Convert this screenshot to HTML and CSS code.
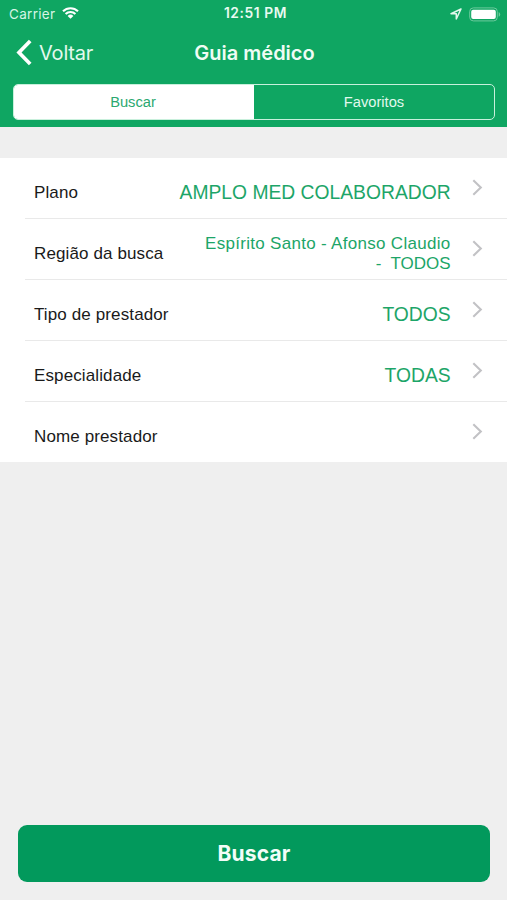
FILE: index.html
```html
<!DOCTYPE html>
<html lang="pt-BR">
<head>
    <meta charset="UTF-8">
    <title>Guia médico</title>
    <link rel="stylesheet" href="styles.css">
</head>
<body>
<header class="header">
    <div class="status">
        <div class="status-left">
            <span class="carrier">Carrier</span>
            <svg class="wifi" width="17" height="12" viewBox="0 0 17 12">
                <path d="M1 4.3a10.7 10.7 0 0 1 15 0M3.6 7a7 7 0 0 1 9.8 0" fill="none" stroke="#fff" stroke-width="2.1"/>
                <path d="M8.5 11.8L5.6 8.9a4.1 4.1 0 0 1 5.8 0z" fill="#fff"/>
            </svg>
        </div>
        <span class="time">12:51 PM</span>
        <div class="status-right">
            <svg class="location" width="12" height="12" viewBox="0 0 12 12">
                <path d="M11 1L1 5.7H6.3V11z" fill="none" stroke="#e2f7ec" stroke-width="1.5" stroke-linejoin="round"/>
            </svg>
            <svg class="battery" width="32" height="15" viewBox="0 0 32 15">
                <rect x=".7" y=".9" width="27.6" height="13" rx="3.6" fill="none" stroke="#6cc99d" stroke-width="1"/>
                <rect x="2.2" y="2.7" width="24.6" height="9.4" rx="2" fill="#fff"/>
                <path d="M29.7 5v4.8q1.5-.8 1.5-2.4t-1.5-2.4z" fill="#6cc99d"/>
            </svg>
        </div>
    </div>
    <nav class="navbar">
        <a class="back">
            <svg width="17" height="27" viewBox="0 0 17 27">
                <path d="M14.2 2L3 13.5 14.2 25" fill="none" stroke="#fff" stroke-width="3.7"/>
            </svg>
            <span>Voltar</span>
        </a>
        <h1 class="title">Guia médico</h1>
    </nav>
    <div class="tabs">
        <div class="tab active">Buscar</div>
        <div class="tab">Favoritos</div>
    </div>
</header>

<ul class="list">
    <li class="row">
        <span class="label">Plano</span>
        <span class="value">AMPLO MED COLABORADOR</span>
        <svg class="chevron" width="11" height="17" viewBox="0 0 11 17"><path d="M1.3 1.2L8.8 8.5 1.3 15.8"/></svg>
    </li>
    <li class="row">
        <span class="label">Região da busca</span>
        <span class="value small"><span class="city">Espírito Santo - Afonso Claudio</span><br>-&nbsp; TODOS</span>
        <svg class="chevron" width="11" height="17" viewBox="0 0 11 17"><path d="M1.3 1.2L8.8 8.5 1.3 15.8"/></svg>
    </li>
    <li class="row">
        <span class="label">Tipo de prestador</span>
        <span class="value">TODOS</span>
        <svg class="chevron" width="11" height="17" viewBox="0 0 11 17"><path d="M1.3 1.2L8.8 8.5 1.3 15.8"/></svg>
    </li>
    <li class="row">
        <span class="label">Especialidade</span>
        <span class="value">TODAS</span>
        <svg class="chevron" width="11" height="17" viewBox="0 0 11 17"><path d="M1.3 1.2L8.8 8.5 1.3 15.8"/></svg>
    </li>
    <li class="row">
        <span class="label">Nome prestador</span>
        <span class="value"></span>
        <svg class="chevron" width="11" height="17" viewBox="0 0 11 17"><path d="M1.3 1.2L8.8 8.5 1.3 15.8"/></svg>
    </li>
</ul>

<footer class="footer">
    <button class="search">Buscar</button>
</footer>
</body>
</html>
```
FILE: styles.css
```css
* {
    box-sizing: border-box;
}

body {
    display: flex;
    flex-direction: column;
    height: 900px;
    margin: 0;
    background-color: #efefef;
    font-family: "Liberation Sans", Arial, sans-serif;
}

/* header */
.header {
    height: 127px;
    background-color: #0fa662;
    color: white;
}

.status {
    display: grid;
    grid-template-columns: 1fr auto 1fr;
    align-items: center;
    height: 28px;
    padding: 0 6px 0 9px;
    font-family: Inter, sans-serif;
    font-size: 13.5px;
}

.status-left, .status-right {
    display: flex;
    align-items: center;
}

.status-left {
    gap: 7px;
}

.status-right {
    justify-content: flex-end;
    gap: 7px;
}

.carrier {
    color: #d5f5e5;
    letter-spacing: 0.3px;
}

.wifi {
    margin-top: -2px;
}

.time {
    margin-top: -2px;
    padding-left: 1px;
    font-weight: 600;
    font-size: 13.8px;
    letter-spacing: 0.6px;
    color: #e8faf1;
}

.navbar {
    display: grid;
    grid-template-columns: 1fr auto 1fr;
    align-items: center;
    height: 48px;
    padding: 1px 14px 0 16px;
}

.back {
    display: flex;
    align-items: center;
    gap: 6px;
    font-family: Inter, sans-serif;
    font-size: 20px;
    letter-spacing: -0.2px;
    color: #e2f9ee;
}

.title {
    margin: 0;
    font-family: Inter, sans-serif;
    font-size: 20px;
    font-weight: 600;
    color: #effcf5;
}

.tabs {
    display: flex;
    height: 36px;
    margin: 8px 12px 0 13px;
    border: 1.5px solid #c8f0dc;
    border-radius: 5px;
    overflow: hidden;
}

.tab {
    flex: 1;
    line-height: 35px;
    text-align: center;
    font-size: 14.7px;
    color: #e2f9ee;
}

.tab.active {
    flex: 0 0 240px;
    padding-right: 2px;
    background-color: white;
    color: #2ba870;
}

/* list */
.list {
    margin: 31px 0 0;
    padding: 0 0 0 25px;
    list-style: none;
    background-color: white;
}

.row {
    display: flex;
    align-items: center;
    height: 61px;
    padding: 9px 24px 0 9px;
    border-bottom: 1px solid #e9e9e9;
}

.row:last-child {
    height: 60px;
    padding-top: 10px;
    border-bottom: none;
}

.label {
    font-size: 17px;
    letter-spacing: 0.12px;
    color: #1a1a1a;
}

.value {
    flex: 1;
    text-align: right;
    font-size: 19.3px;
    color: #1da568;
}

.value.small {
    font-size: 17px;
    line-height: 20px;
}

.city {
    letter-spacing: 0.3px;
}

.chevron {
    margin: -11px 0 0 21.4px;
    fill: none;
    stroke: #c2c2c5;
    stroke-width: 2.1;
}

/* bottom button */
.footer {
    margin-top: auto;
    padding: 0 17px 18px 18px;
}

.search {
    display: block;
    width: 100%;
    height: 57px;
    padding: 0;
    border: none;
    border-radius: 9px;
    background-color: #02995c;
    color: #f3fdf8;
    font-family: Inter, sans-serif;
    font-size: 21px;
    font-weight: 700;
    letter-spacing: 0.2px;
}
```
